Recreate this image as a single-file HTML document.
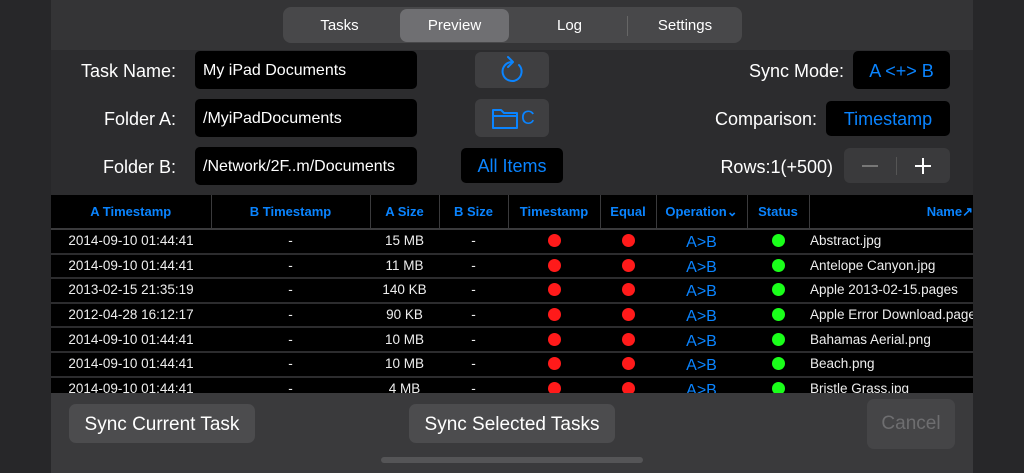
<!DOCTYPE html>
<html><head><style>
*{margin:0;padding:0;box-sizing:border-box}
body{width:1024px;height:473px;background:#272729;font-family:"Liberation Sans",sans-serif;position:relative;overflow:hidden;color:#fff}
.a{position:absolute}
.main{left:51px;top:0;width:922px;height:473px;background:#2c2c2e}
.top{left:51px;top:0;width:922px;height:50px;background:#343436}
.seg{left:283px;top:7px;width:459px;height:36px;background:#48484a;border-radius:8px}
.segb{position:absolute;top:9px;height:34px;line-height:34px;font-size:15px;text-align:center;color:#fff}
.lbl{font-size:18px;color:#fff;text-align:right}
.fld{background:#000;border-radius:5px;height:38px;line-height:40px;font-size:16px;padding-left:8px}
.btn{background:#3f3f41;border-radius:6px}
.blue{color:#0a84ff}
.tw{position:absolute;left:51px;top:195px;width:922px;height:198px;overflow:hidden;background:#000}
table{border-collapse:collapse;width:922px;table-layout:fixed;background:#000}
td,th{font-size:13px;white-space:nowrap;overflow:hidden;padding:0}
th{height:34px;color:#0a84ff;font-weight:bold;border-left:1.5px solid #3a3a3c;border-bottom:2px solid #3a3a3c}
th:first-child{border-left:none}
td{height:24.6px;line-height:18px;text-align:center;color:#eee;border-top:2px solid #2c2c2e;font-size:13.5px}
.dr,.dg{display:inline-block;width:13px;height:13px;border-radius:50%;vertical-align:middle;position:relative;top:-1px}
.dr{background:#ff1a1a}.dg{background:#1aff1a}
.op{color:#0a84ff;font-size:16px;line-height:18px}
.op span{position:relative;top:2px}
td.n{text-align:left;padding-left:1px}
.bot{left:51px;top:393px;width:922px;height:80px;background:#3a3a3c}
.bb{background:#4c4c4e;border-radius:7px;font-size:19px;text-align:center;color:#fff}
</style></head><body>
<div class="a main"></div>
<div class="a top"></div>
<div class="a seg"></div>
<div class="segb" style="left:283px;width:113px">Tasks</div>
<div class="a" style="left:400px;top:9px;width:109px;height:33px;background:#6f6f72;border-radius:7px"></div>
<div class="segb" style="left:400px;width:109px">Preview</div>
<div class="segb" style="left:512px;width:115px">Log</div>
<div class="a" style="left:627px;top:16px;width:1px;height:20px;background:#666"></div>
<div class="segb" style="left:628px;width:114px">Settings</div>

<div class="a lbl" style="left:40px;top:61px;width:136px">Task Name:</div>
<div class="a lbl" style="left:40px;top:109px;width:136px">Folder A:</div>
<div class="a lbl" style="left:40px;top:157px;width:136px">Folder B:</div>
<div class="a fld" style="left:195px;top:51px;width:222px">My iPad Documents</div>
<div class="a fld" style="left:195px;top:99px;width:222px">/MyiPadDocuments</div>
<div class="a fld" style="left:195px;top:147px;width:222px">/Network/2F..m/Documents</div>

<div class="a btn" style="left:475px;top:52px;width:74px;height:36px"></div>
<svg class="a" style="left:497px;top:55px" width="28" height="30" viewBox="0 0 28 30"><path d="M15 7 A9.5 9.5 0 1 0 22 10" fill="none" stroke="#0a84ff" stroke-width="2" stroke-linecap="round"/><path d="M11 2 L16 7 L11 12" fill="none" stroke="#0a84ff" stroke-width="2" stroke-linecap="round" stroke-linejoin="round"/></svg>
<div class="a btn" style="left:475px;top:99px;width:74px;height:38px"></div>
<svg class="a" style="left:490px;top:106px" width="30" height="26" viewBox="0 0 30 26"><path d="M3 4 H11 L14 7 H27 V22 H3 Z M3 10 H27" fill="none" stroke="#0a84ff" stroke-width="2" stroke-linejoin="round"/></svg>
<div class="a blue" style="left:521px;top:108px;font-size:19px">C</div>
<div class="a" style="left:461px;top:148px;width:102px;height:35px;background:#000;border-radius:5px;text-align:center;line-height:37px;font-size:18px;color:#0a84ff">All Items</div>

<div class="a lbl" style="left:640px;top:61px;width:204px">Sync Mode:</div>
<div class="a lbl" style="left:640px;top:109px;width:177px">Comparison:</div>
<div class="a lbl" style="left:640px;top:157px;width:193px">Rows:1(+500)</div>
<div class="a" style="left:853px;top:51px;width:97px;height:38px;background:#000;border-radius:5px;text-align:center;line-height:40px;font-size:18px;color:#0a84ff">A &lt;+&gt; B</div>
<div class="a" style="left:826px;top:101px;width:124px;height:35px;background:#000;border-radius:5px;text-align:center;line-height:37px;font-size:18px;color:#0a84ff">Timestamp</div>
<div class="a btn" style="left:844px;top:148px;width:106px;height:35px;background:#3a3a3c"></div>
<div class="a" style="left:862px;top:165px;width:16px;height:2px;background:#777"></div>
<div class="a" style="left:896px;top:157px;width:1px;height:18px;background:#555"></div>
<div class="a" style="left:915px;top:165px;width:16px;height:2px;background:#fff"></div>
<div class="a" style="left:922px;top:158px;width:2px;height:16px;background:#fff"></div>

<div class="tw"><table>
<colgroup><col style="width:160px"><col style="width:159px"><col style="width:69px"><col style="width:69px"><col style="width:92px"><col style="width:56px"><col style="width:91px"><col style="width:62px"><col style="width:164px"></colgroup>
<tr><th>A Timestamp</th><th>B Timestamp</th><th>A Size</th><th>B Size</th><th>Timestamp</th><th>Equal</th><th>Operation&#8964;</th><th>Status</th><th style="text-align:right">Name&#8599;</th></tr>
<tr><td>2014-09-10 01:44:41</td><td>-</td><td>15 MB</td><td>-</td><td><span class="dr"></span></td><td><span class="dr"></span></td><td class="op"><span>A&gt;B</span></td><td><span class="dg"></span></td><td class="n">Abstract.jpg</td></tr>
<tr><td>2014-09-10 01:44:41</td><td>-</td><td>11 MB</td><td>-</td><td><span class="dr"></span></td><td><span class="dr"></span></td><td class="op"><span>A&gt;B</span></td><td><span class="dg"></span></td><td class="n">Antelope Canyon.jpg</td></tr>
<tr><td>2013-02-15 21:35:19</td><td>-</td><td>140 KB</td><td>-</td><td><span class="dr"></span></td><td><span class="dr"></span></td><td class="op"><span>A&gt;B</span></td><td><span class="dg"></span></td><td class="n">Apple 2013-02-15.pages</td></tr>
<tr><td>2012-04-28 16:12:17</td><td>-</td><td>90 KB</td><td>-</td><td><span class="dr"></span></td><td><span class="dr"></span></td><td class="op"><span>A&gt;B</span></td><td><span class="dg"></span></td><td class="n">Apple Error Download.pages</td></tr>
<tr><td>2014-09-10 01:44:41</td><td>-</td><td>10 MB</td><td>-</td><td><span class="dr"></span></td><td><span class="dr"></span></td><td class="op"><span>A&gt;B</span></td><td><span class="dg"></span></td><td class="n">Bahamas Aerial.png</td></tr>
<tr><td>2014-09-10 01:44:41</td><td>-</td><td>10 MB</td><td>-</td><td><span class="dr"></span></td><td><span class="dr"></span></td><td class="op"><span>A&gt;B</span></td><td><span class="dg"></span></td><td class="n">Beach.png</td></tr>
<tr><td>2014-09-10 01:44:41</td><td>-</td><td>4 MB</td><td>-</td><td><span class="dr"></span></td><td><span class="dr"></span></td><td class="op"><span>A&gt;B</span></td><td><span class="dg"></span></td><td class="n">Bristle Grass.jpg</td></tr>
</table></div>

<div class="a bot"></div>
<div class="a bb" style="left:69px;top:404px;width:186px;height:39px;line-height:41px">Sync Current Task</div>
<div class="a bb" style="left:409px;top:404px;width:206px;height:39px;line-height:41px">Sync Selected Tasks</div>
<div class="a bb" style="left:867px;top:399px;width:88px;height:50px;line-height:50px;color:#6e6e70;background:#454547">Cancel</div>
<div class="a" style="left:381px;top:457px;width:262px;height:6px;border-radius:3px;background:#555557"></div>
</body></html>
